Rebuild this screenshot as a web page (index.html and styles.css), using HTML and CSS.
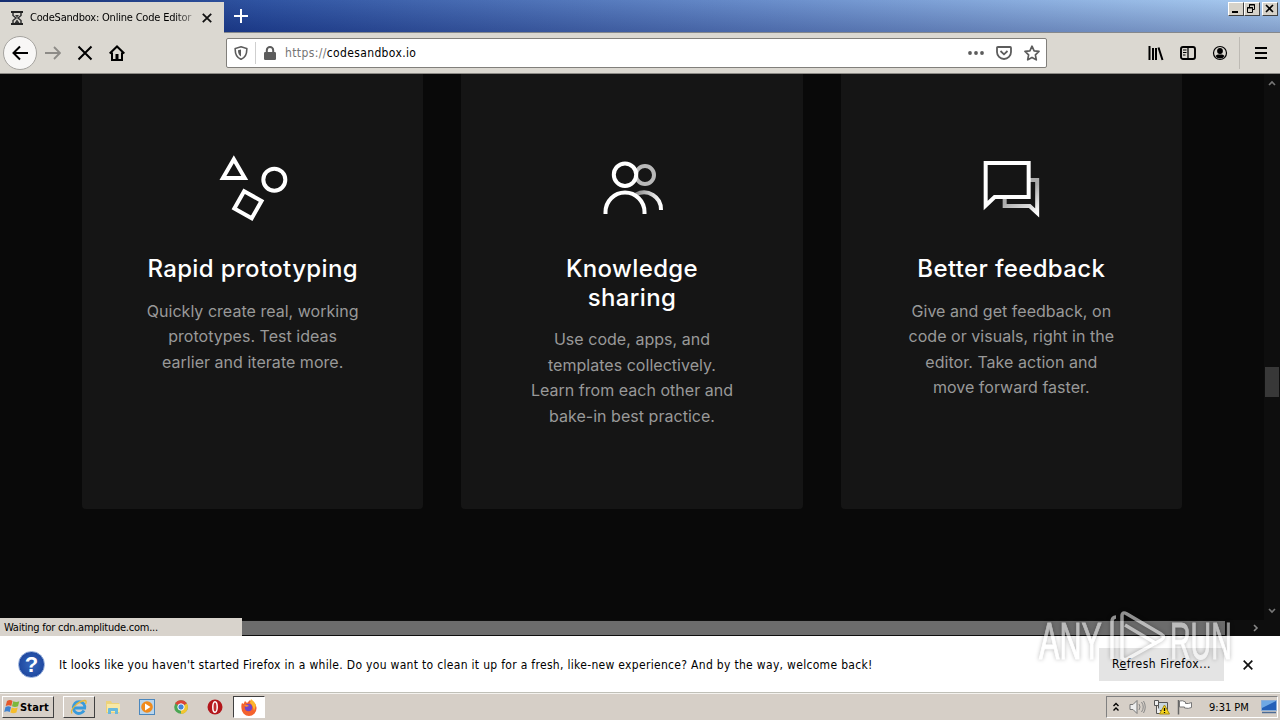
FILE: index.html
```html
<!DOCTYPE html>
<html lang="en">
<head>
  <meta charset="UTF-8">
  <meta name="viewport" content="width=device-width, initial-scale=1.0">
  <title>CodeSandbox: Online Code Editor</title>
  <link rel="stylesheet" href="styles.css">
</head>
<body>
  <div class="titlebar">
    <div class="tab">
      <svg class="tab-icon" width="12" height="14" viewBox="0 0 12 14"><path d="M0 1h12M0 13h12" stroke="#222" stroke-width="2"/><path d="M2 2v2.500l3 2.500-3 2.500V12M10 2v2.500L7 7l3 2.500V12" fill="none" stroke="#333" stroke-width="1.500"/><path d="M4 4h4L6 6.500zM3.500 12L6 8.500 8.500 12z" fill="#333"/></svg>
      <span class="tab-title">CodeSandbox: Online Code Editor</span>
      <svg class="tab-close" width="10" height="10" viewBox="0 0 10 10"><path d="M.8.800l8.400 8.400M9.200.800L.8 9.200" stroke="#111" stroke-width="1.800"/></svg>
    </div>
    <svg class="new-tab" width="14" height="14" viewBox="0 0 14 14"><path d="M7 0v14M0 7h14" stroke="#fff" stroke-width="2"/></svg>
    <div class="window-buttons">
      <div class="window-button"><svg width="13" height="11" viewBox="0 0 13 11"><path d="M3 8h6v2H3z"/></svg></div>
      <div class="window-button"><svg width="13" height="11" viewBox="0 0 13 11"><path d="M4.500 4V1.500h5v5H8M4 2h6" fill="none" stroke="#000"/><path d="M2.500 4.500h5v5h-5zM2 5h6" fill="none" stroke="#000"/></svg></div>
      <div class="window-button close"><svg width="13" height="11" viewBox="0 0 13 11"><path d="M3 2l7 7M10 2L3 9" stroke="#000" stroke-width="1.600"/></svg></div>
    </div>
  </div>

  <div class="toolbar">
    <div class="back"><svg width="16" height="16" viewBox="0 0 16 16"><path d="M16 8H1.500M8 1.500L1.500 8 8 14.500" fill="none" stroke="#000" stroke-width="2"/></svg></div>
    <svg class="nav-icon" width="16" height="16" viewBox="0 0 16 16"><path d="M0 8h15M9 2l6 6-6 6" fill="none" stroke="#8d8b87" stroke-width="1.800"/></svg>
    <svg class="nav-icon" width="16" height="16" viewBox="0 0 16 16"><path d="M1.500 1.500l13 13M14.500 1.500l-13 13" stroke="#000" stroke-width="2"/></svg>
    <svg class="nav-icon" width="16" height="16" viewBox="0 0 16 16"><path d="M.7 8.500L8 1.500l7.300 7M3 7.500V15h10V7.500" fill="none" stroke="#000" stroke-width="2"/><path d="M6.500 9h3v5h-3z"/></svg>
    <div class="url-bar">
      <svg class="shield" width="14" height="14" viewBox="0 0 14 14"><path d="M7 .8L12.800 2.500C13 8 11 12 7 13.300 3 12 1 8 1.200 2.500z" fill="none" stroke="#5c5c5c" stroke-width="1.600"/><path d="M7 3.500v7C5 9.500 4 7.500 4 4.300z" fill="#5c5c5c"/></svg>
      <div class="url-divider"></div>
      <svg class="lock" width="14" height="14" viewBox="0 0 14 14"><rect x="1" y="6" width="12" height="8" rx="1.200" fill="#5c5c5c"/><path d="M3.800 7V4.200a3.200 3.200 0 016.400 0V7" fill="none" stroke="#5c5c5c" stroke-width="2"/></svg>
      <span class="url"><span class="scheme">https://</span>codesandbox.io</span>
      <svg class="dots" width="16" height="4" viewBox="0 0 16 4"><circle cx="2" cy="2" r="1.900"/><circle cx="8" cy="2" r="1.900"/><circle cx="14" cy="2" r="1.900"/></svg>
      <svg class="pocket" width="16" height="14" viewBox="0 0 16 14"><path d="M1.900 1h12.200q.9 0 .9.900V6a7 7 0 01-14 0V1.900Q1 1 1.900 1z" fill="none" stroke="#5c5c5c" stroke-width="1.800"/><path d="M4.500 5L8 8.300 11.500 5" fill="none" stroke="#5c5c5c" stroke-width="1.800"/></svg>
      <svg class="star" width="16" height="16" viewBox="0 0 16 16"><path d="M8 1.200l2.100 4.600 4.900.6-3.600 3.400.9 5L8 12.400l-4.300 2.400.9-5L1 6.400l4.900-.6z" fill="none" stroke="#5c5c5c" stroke-width="1.700" stroke-linejoin="round"/></svg>
    </div>
    <div class="toolbar-right">
      <svg width="16" height="16" viewBox="0 0 16 16"><path d="M1.500 1v14M5 3v12M8 3v12M10.500 2.500l4 12.500" stroke="#000" stroke-width="2"/></svg>
      <svg width="16" height="16" viewBox="0 0 16 16"><rect x="1" y="2" width="14" height="12" rx="2" fill="none" stroke="#000" stroke-width="1.900"/><path d="M8 2v12" stroke="#000" stroke-width="1.300"/><path d="M3 5h3.500M3 7.500h3.500M3 10h2.500" stroke="#000"/></svg>
      <svg width="16" height="16" viewBox="0 0 16 16"><circle cx="8" cy="8" r="6.500" fill="none" stroke="#000" stroke-width="1.200"/><circle cx="8" cy="6" r="2.900"/><path d="M3.500 11q1-1.500 2.500-1.500h4q1.500 0 2.500 1.500Q11 13.500 8 13.500T3.500 11z"/></svg>
      <div class="divider"></div>
      <svg class="menu" width="12" height="14" viewBox="0 0 12 14"><path d="M0 2h12M0 7h12M0 12h12" stroke="#000" stroke-width="2"/></svg>
    </div>
  </div>

  <div class="viewport">
    <div class="page">
      <div class="card">
        <svg class="card-icon" viewBox="212.670 148 80 80"><g fill="none" stroke="#fff" stroke-width="4"><path d="M233.500 159.300L222.600 178h21.800z"/><circle cx="274" cy="179.700" r="11"/><path d="M243.800 191.200l17.400 9.800-9.800 17.200-17.400-9.800z"/></g></svg>
        <h2>Rapid prototyping</h2>
        <p>Quickly create real, working<br>prototypes. Test ideas<br>earlier and iterate more.</p>
      </div>
      <div class="card">
        <svg class="card-icon" viewBox="592 148 80 80">
          <defs><linearGradient id="fade"><stop offset="0" stop-color="#888"/><stop offset="1" stop-color="#fff"/></linearGradient></defs>
          <g fill="none" stroke-width="4"><circle cx="645" cy="175" r="9" stroke="#b8b8b8"/><path d="M636 194.500a17 17 0 0125 15.500" stroke="url(#fade)"/><circle cx="625" cy="174.700" r="11.200" fill="#151515" stroke="#fff"/><path d="M605.500 214v-2a19.500 19.500 0 0139 0v2" stroke="#fff"/></g>
        </svg>
        <h2>Knowledge<br>sharing</h2>
        <p>Use code, apps, and<br>templates collectively.<br>Learn from each other and<br>bake-in best practice.</p>
      </div>
      <div class="card">
        <svg class="card-icon" viewBox="971.330 148 80 80">
          <defs><linearGradient id="bubble" gradientUnits="userSpaceOnUse" x1="1024" y1="192" x2="1037" y2="214"><stop offset="0" stop-color="#aaa"/><stop offset="1" stop-color="#fff"/></linearGradient></defs>
          <g fill="none" stroke-width="4"><path d="M1030 180h7.500v33l-7.500-7h-25v-9" stroke="url(#bubble)"/><path d="M986 205.500V163h43v34h-34z" fill="#151515" stroke="#fff"/></g>
        </svg>
        <h2>Better feedback</h2>
        <p>Give and get feedback, on<br>code or visuals, right in the<br>editor. Take action and<br>move forward faster.</p>
      </div>
    </div>
    <div class="scrollbar">
      <svg width="8" height="6" viewBox="0 0 8 6"><path d="M1 5l3-3 3 3" fill="none" stroke="#777" stroke-width="1.600"/></svg>
      <div class="scroll-thumb"></div>
      <svg width="8" height="6" viewBox="0 0 8 6"><path d="M1 1l3 3 3-3" fill="none" stroke="#777" stroke-width="1.600"/></svg>
    </div>
  </div>

  <div class="bottom-scroll">
    <div class="status">Waiting for cdn.amplitude.com...</div>
    <div class="h-thumb"></div>
    <svg class="h-arrow" width="6" height="8" viewBox="0 0 6 8"><path d="M1 1l3 3-3 3" fill="none" stroke="#888" stroke-width="1.600"/></svg>
  </div>

  <div class="notification">
    <div class="question">?</div>
    <span class="message">It looks like you haven't started Firefox in a while. Do you want to clean it up for a fresh, like-new experience? And by the way, welcome back!</span>
    <div class="refresh">R<u>e</u>fresh Firefox...</div>
    <svg class="dismiss" width="10" height="10" viewBox="0 0 10 10"><path d="M.7.700l8.600 8.600M9.300.700L.7 9.300" stroke="#111" stroke-width="1.700"/></svg>
  </div>

  <div class="taskbar">
    <div class="start">
      <svg width="16" height="16" viewBox="0 0 16 16"><path d="M3 2q3-2 5.500 0L7.300 7Q5 5.500 1.700 7z" fill="#e5582b"/><path d="M9.300 2.300q3 1.500 6 0L14 7.300q-3 1.500-6 0z" fill="#7cb83c"/><path d="M1.500 8q3-1.700 5.500 0L5.800 13Q3 11.500.2 13z" fill="#3f82d0"/><path d="M7.700 8.500q3 1.500 6 0l-1.300 5q-3 1.500-6 0z" fill="#f5bd2c"/></svg>
      <span>Start</span>
    </div>
    <div class="task raised"><svg width="18" height="18" viewBox="0 0 18 18"><path d="M14 12.500A5.600 5.600 0 114 7a5.600 5.600 0 0110.700 3H4" fill="none" stroke="#399bdc" stroke-width="2.800"/><path d="M2 15.500C-.5 12 8 3 15 2.500q2 .5.500 3.500" fill="none" stroke="#e7b93a" stroke-width="1.300"/></svg></div>
    <div class="task"><svg width="18" height="18" viewBox="0 0 18 18"><path d="M2 3h5l1 2h7v10H2z" fill="#ecd27a"/><path d="M3 6h13v8H3z" fill="#f8e8a5"/><path d="M4 16v-5q0-1 1-1h8q1 0 1 1v5h-3v-3H7v3z" fill="#69b9dc"/></svg></div>
    <div class="task"><svg width="18" height="18" viewBox="0 0 18 18"><rect x="1.500" y="1.500" width="15" height="15" fill="#b9d5ec" stroke="#4b87bd"/><circle cx="9" cy="9" r="5.800" fill="#f08b1d"/><path d="M7 5.500v7L12.500 9z" fill="#fff"/></svg></div>
    <div class="task"><svg width="18" height="18" viewBox="0 0 18 18"><circle cx="9" cy="9" r="6.800" fill="#4ba653"/><path d="M9 9L3.100 5.600A6.800 6.800 0 0114.900 5.600z" fill="#dc4437"/><path d="M9 9l5.900-3.400A6.800 6.800 0 019 15.800z" fill="#f3c52f"/><circle cx="9" cy="9" r="3.200" fill="#4285d8" stroke="#fff"/></svg></div>
    <div class="task"><svg width="18" height="18" viewBox="0 0 18 18"><circle cx="9" cy="9" r="7.500" fill="#b3161b"/><ellipse cx="9" cy="9" rx="2.200" ry="5.300" fill="#c32d30" stroke="#fff" stroke-width="1.500"/></svg></div>
    <div class="task pressed"><svg width="18" height="18" viewBox="0 0 18 18"><path d="M2 5l1.500 1L5 3l2 2 3-3q1 2 3 2 4 3 3.500 6.500a7.500 7.500 0 01-15 0Q1 7 2 5z" fill="#f4622d"/><path d="M11 1q4 3 5 6l-2 6q-1-6-4-8z" fill="#fcb62d"/><circle cx="8.500" cy="9.500" r="3.700" fill="#7145c8"/><path d="M4 7q3-1 5 1l-3 1z" fill="#f98a32"/></svg></div>
    <div class="tray">
      <svg class="chevrons" width="6" height="10" viewBox="0 0 6 10"><path d="M.5 4L3 1.500 5.500 4M.5 8.500L3 6l2.500 2.500" fill="none" stroke="#000" stroke-width="1.400"/></svg>
      <svg class="speaker" width="17" height="16" viewBox="0 0 17 16"><path d="M1 5.500h3l4-4v13l-4-4H1z" fill="#eee" stroke="#777"/><path d="M10 5q2 3 0 6M12.500 3q3.500 5 0 10M14.500 2q3.500 6 0 12" fill="none" stroke="#888"/></svg>
      <svg class="network" width="17" height="16" viewBox="0 0 17 16"><path d="M5.500 3.500h9v8h-9z" fill="#c9d6dd" stroke="#555"/><path d="M1.500 1.500h4v5h-4zM3.500 6v8.500h5" fill="#eee" stroke="#555"/><path d="M11.500 6l5 9h-10z" fill="#f7d51d" stroke="#a58a13"/><path d="M11.500 9v3M11.500 13v1" stroke="#000" stroke-width="1.300"/></svg>
      <svg class="flag" width="16" height="16" viewBox="0 0 16 16"><path d="M1.500 1v14.500" stroke="#666" stroke-width="1.500"/><path d="M2.500 2q3-1 6 1v1.500q3 .5 6-1v5q-3 1.500-7 .5V8h-5z" fill="#fff" stroke="#777"/></svg>
      <span class="clock">9:31 PM</span>
      <svg class="desktop" width="16" height="14" viewBox="0 0 16 14"><path d="M.5.500h15v10H.5z" fill="#2360b8" stroke="#8aaed8"/><path d="M1 1h14L1 8z" fill="#6ea8e4"/><path d="M1 12.500h14" stroke="#4c6b94" stroke-width="1.500"/></svg>
    </div>
  </div>

  <svg class="watermark" width="200" height="60" viewBox="0 0 200 60">
    <g fill="#fff" stroke="#fff" stroke-width="1"><text transform="translate(3 49.500) scale(.6 1)">ANY</text><text transform="translate(134 49.500) scale(.56 1)">RUN</text></g>
    <path d="M76 50V13q0-5 4-5M86 50V7q0-5 5-2l34 20q5 3 0 6L91 50q-5 2-5-3M89 16l32 19" fill="none" stroke="#fff" stroke-width="3.500"/>
  </svg>
</body>
</html>
```
FILE: styles.css
```css
* {
  box-sizing: border-box;
}
body {
  margin: 0;
  width: 1280px;
  height: 720px;
  overflow: hidden;
  position: relative;
  display: flex;
  flex-direction: column;
  font-family: "DejaVu Sans Condensed", "DejaVu Sans", sans-serif;
  font-size: 11px;
  color: #000;
  background-color: #090909;
}
svg {
  display: block;
  flex-shrink: 0;
}

/* browser chrome */
.titlebar {
  height: 33px;
  display: flex;
  background: linear-gradient(rgba(255, 255, 255, 0.05), rgba(0, 0, 60, 0.22)), linear-gradient(90deg, #0a246a, #244a9c 20%, #6288c8 60%, #a6caf0);
  border-bottom: 1px solid #85888c;
}
.tab {
  width: 224px;
  height: 31px;
  margin-top: 2px;
  padding: 0 11px;
  display: flex;
  align-items: center;
  background-color: #dbd8d1;
}
.tab-title {
  width: 164px;
  margin: 0 8px 0 7px;
  overflow: hidden;
  white-space: nowrap;
  letter-spacing: -0.2px;
  -webkit-mask-image: linear-gradient(90deg, #000 88%, rgba(0, 0, 0, 0.3));
  mask-image: linear-gradient(90deg, #000 88%, rgba(0, 0, 0, 0.3));
}
.new-tab {
  margin: 9px 0 0 10px;
}
.window-buttons {
  margin: 2px 2px 0 auto;
  display: flex;
}
.window-button {
  width: 16px;
  height: 14px;
  background-color: #d6d2c9;
  border: 1px solid;
  border-color: #fff #404040 #404040 #fff;
}
.window-button.close {
  margin-left: 2px;
}
.toolbar {
  height: 41px;
  display: flex;
  align-items: center;
  padding-left: 3px;
  background-color: #dbd8d1;
  border-bottom: 1px solid #8c8a86;
}
.back {
  width: 34px;
  height: 34px;
  border-radius: 50%;
  border: 1px solid #a5a39f;
  background-color: #f8f7f6;
  display: flex;
  align-items: center;
  justify-content: center;
}
.nav-icon {
  margin-left: 16px;
}
.back + .nav-icon {
  margin-left: 8px;
}
.url-bar {
  width: 821px;
  height: 30px;
  margin-left: 101px;
  padding: 0 6px 0 7px;
  display: flex;
  align-items: center;
  background-color: #fff;
  border: 1px solid #817f7b;
  border-radius: 2px;
}
.url-divider {
  width: 1px;
  height: 22px;
  margin: 0 7px;
  background-color: #cfcfcf;
}
.url {
  margin-left: 8px;
  font-size: 12px;
  letter-spacing: 0.37px;
}
.scheme {
  color: #747474;
}
.dots {
  margin-left: auto;
  fill: #5c5c5c;
}
.pocket,
.star {
  margin-left: 12px;
}
.toolbar-right {
  margin-left: auto;
  padding-right: 13px;
  display: flex;
  align-items: center;
  gap: 16px;
}
.divider {
  width: 1px;
  height: 32px;
  margin: 0 -1px 0 -5px;
  background-color: #bdbab4;
}

/* page content */
.viewport {
  height: 547px;
  display: flex;
}
.page {
  width: 1264px;
  padding: 0 82px;
  display: flex;
  gap: 38px;
  font-family: Inter, sans-serif;
}
.card {
  flex: 1;
  height: 435px;
  padding-top: 74px;
  text-align: center;
  background-color: #151515;
  border-radius: 0 0 4px 4px;
}
.card-icon {
  width: 80px;
  height: 80px;
  margin: 0 auto 27px;
}
.card h2 {
  margin: 0 0 15px;
  font-size: 24px;
  font-weight: 500;
  line-height: 28.6px;
  letter-spacing: 0.36px;
  color: #fff;
}
.card p {
  margin: 0;
  font-size: 16px;
  line-height: 25.6px;
  letter-spacing: 0.03px;
  color: #999;
}
.scrollbar {
  width: 16px;
  padding: 6px 0;
  display: flex;
  flex-direction: column;
  align-items: center;
  justify-content: space-between;
  background-color: #0e0e0e;
}
.scroll-thumb {
  width: 14px;
  height: 30px;
  margin-top: 70px;
  background-color: #383838;
}
.bottom-scroll {
  height: 16px;
  display: flex;
  align-items: center;
  background-color: #0e0e0e;
}
.status {
  width: 242px;
  height: 18px;
  margin-top: -2px;
  padding-left: 4px;
  line-height: 20px;
  letter-spacing: -0.25px;
  background-color: #d8d3cc;
}
.h-thumb {
  width: 983px;
  height: 14px;
  background-color: #6c6c6c;
}
.h-arrow {
  margin-left: 28px;
}

/* notification bar */
.notification {
  height: 57px;
  padding: 1px 27px 0 18px;
  display: flex;
  align-items: center;
  background-color: #fff;
  border-bottom: 1px solid #c0c0b8;
}
.question {
  width: 27px;
  height: 27px;
  border-radius: 50%;
  border: 1px solid #8ea9d8;
  background: radial-gradient(#3467bd, #173c94);
  color: #fff;
  font: bold 22px/25px "Liberation Sans", sans-serif;
  text-align: center;
}
.message {
  margin: 1px 0 0 14px;
  font-size: 12px;
  letter-spacing: 0.31px;
  white-space: nowrap;
}
.refresh {
  width: 125px;
  height: 33px;
  margin: 0 19px 0 auto;
  line-height: 33px;
  font-size: 12px;
  letter-spacing: 0.5px;
  text-align: center;
  background-color: #e4e4e4;
}

/* taskbar */
.taskbar {
  height: 27px;
  padding: 0 2px;
  display: flex;
  align-items: center;
  background-color: #d6cfc7;
  border-top: 1px solid #f4f2ee;
}
.start {
  width: 52px;
  height: 22px;
  padding-left: 1px;
  margin-right: 9px;
  display: flex;
  align-items: center;
  font-weight: bold;
  letter-spacing: 0.15px;
  border: 1px solid;
  border-color: #fff #404040 #404040 #fff;
}
.task {
  width: 32px;
  height: 22px;
  margin-right: 2px;
  display: flex;
  align-items: center;
  justify-content: center;
}
.raised {
  border: 1px solid;
  border-color: #fff #404040 #404040 #fff;
}
.pressed {
  background-color: #fff;
  border: 1px solid;
  border-color: #404040 #fff #fff #404040;
}
.tray {
  width: 172px;
  height: 22px;
  margin-left: auto;
  padding-left: 6px;
  display: flex;
  align-items: center;
  border: 1px solid;
  border-color: #808080 #fff #fff #808080;
}
.speaker {
  margin-left: 10px;
}
.network,
.flag {
  margin-left: 7px;
}
.clock {
  margin-left: 16px;
}
.desktop {
  margin-left: auto;
}

.watermark {
  position: absolute;
  left: 1036px;
  top: 609px;
  overflow: visible;
  opacity: 0.55;
  filter: drop-shadow(0 0 2px rgba(0, 0, 0, 0.5));
  font: 51px "Liberation Sans", sans-serif;
}
```
